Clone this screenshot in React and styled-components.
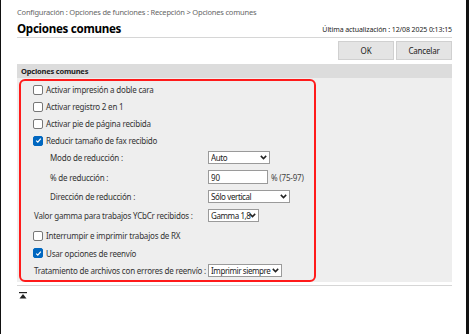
import React from "react";
import styled, { createGlobalStyle } from "styled-components";

const GlobalStyle = createGlobalStyle`
  html, body {
    margin: 0;
    padding: 0;
    background: #ffffff;
  }
  body {
    font-family: "Noto Sans", "Open Sans", sans-serif;
    font-size: 8px;
    letter-spacing: -0.2px;
    color: #333;
  }
`;

export default function App() {
  return (
    <>
      <GlobalStyle />
      <Frame>
        <Page>
          <Breadcrumb>
            Configuración : Opciones de funciones : Recepción &gt; Opciones comunes
          </Breadcrumb>
          <TitleRow>
            <Title>Opciones comunes</Title>
            <Updated>Última actualización : 12/08 2025 0:13:15</Updated>
          </TitleRow>
          <ButtonBar>
            <Button>OK</Button>
            <Button>Cancelar</Button>
          </ButtonBar>

          <Section>
            <SectionHeader>Opciones comunes</SectionHeader>
            <Panel>
              <Highlight>
                <CheckRow>
                  <Check />
                  Activar impresión a doble cara
                </CheckRow>
                <CheckRow>
                  <Check />
                  Activar registro 2 en 1
                </CheckRow>
                <CheckRow>
                  <Check />
                  Activar pie de página recibida
                </CheckRow>
                <CheckRow>
                  <Check checked />
                  Reducir tamaño de fax recibido
                </CheckRow>

                <FieldRow $h={17}>
                  <Label $indent>Modo de reducción :</Label>
                  <Select width={62} value="Auto" options={["Auto", "Fijo"]} />
                </FieldRow>
                <FieldRow $h={22}>
                  <Label $indent>% de reducción :</Label>
                  <TextInput defaultValue="90" />
                  <Hint>% (75-97)</Hint>
                </FieldRow>
                <FieldRow $h={17}>
                  <Label $indent>Dirección de reducción :</Label>
                  <Select
                    width={82}
                    value="Sólo vertical"
                    options={["Sólo vertical", "Vertical/Horizontal"]}
                  />
                </FieldRow>
                <FieldRow $h={21}>
                  <Label>Valor gamma para trabajos YCbCr recibidos :</Label>
                  <Select
                    width={51}
                    value="Gamma 1,8"
                    options={["Gamma 1,0", "Gamma 1,4", "Gamma 1,8", "Gamma 2,2"]}
                  />
                </FieldRow>

                <CheckRow $h={19}>
                  <Check />
                  Interrumpir e imprimir trabajos de RX
                </CheckRow>
                <CheckRow $h={16}>
                  <Check checked />
                  Usar opciones de reenvío
                </CheckRow>
                <FieldRow $h={18}>
                  <Label>Tratamiento de archivos con errores de reenvío :</Label>
                  <Select
                    width={74}
                    value="Imprimir siempre"
                    options={["Imprimir siempre", "Desactivado"]}
                  />
                </FieldRow>
              </Highlight>
            </Panel>
          </Section>

          <Footer>
            <ToTop aria-label="Arriba">
              <svg width="8" height="7" viewBox="0 0 8 7">
                <rect x="0" y="0" width="8" height="1.2" fill="#222" />
                <path d="M4 2 L7.5 6.5 L0.5 6.5 Z" fill="#222" />
              </svg>
            </ToTop>
          </Footer>
        </Page>
      </Frame>
    </>
  );
}

function Check({ checked }) {
  return (
    <Box $checked={checked}>
      {checked && (
        <svg width="7" height="7" viewBox="0 0 7 7">
          <path
            d="M1.2 3.6 L2.8 5.1 L5.8 1.6"
            fill="none"
            stroke="#fff"
            strokeWidth="1.3"
          />
        </svg>
      )}
    </Box>
  );
}

function Select({ width, value, options }) {
  return (
    <SelectWrap style={{ width }}>
      <NativeSelect defaultValue={value}>
        {options.map((o) => (
          <option key={o}>{o}</option>
        ))}
      </NativeSelect>
      <Chevron width="7" height="5" viewBox="0 0 7 5">
        <path d="M0.8 0.9 L3.5 3.6 L6.2 0.9" fill="none" stroke="#222" strokeWidth="1.5" />
      </Chevron>
    </SelectWrap>
  );
}

// Styled Components

const Frame = styled.div`
  position: relative;
  height: 334px;
  border-left: 1px solid #111;
  border-right: 3px solid #111;
  background: #fff;
  box-sizing: border-box;
  overflow: hidden;
`;

const Page = styled.div`
  padding: 6px 14px 0 16px;
`;

const Breadcrumb = styled.div`
  color: #666;
  font-size: 7.5px;
  letter-spacing: -0.2px;
  line-height: 12px;
`;

const TitleRow = styled.div`
  display: flex;
  justify-content: space-between;
  align-items: flex-end;
  margin-top: 3px;
  height: 16px;
  border-bottom: 1px solid #d6d6d6;
`;

const Title = styled.h1`
  margin: 0;
  font-size: 11.6px;
  letter-spacing: -0.3px;
  line-height: 16px;
  font-weight: 700;
  color: #000;
`;

const Updated = styled.div`
  font-size: 7px;
  letter-spacing: -0.1px;
  line-height: 12px;
  padding-bottom: 1px;
  color: #222;
`;

const ButtonBar = styled.div`
  display: flex;
  justify-content: flex-end;
  gap: 2px;
  margin-top: 3px;
`;

const Button = styled.button`
  width: 56px;
  height: 19px;
  padding: 0;
  font-family: inherit;
  font-size: 8px;
  letter-spacing: -0.2px;
  color: #222;
  background: #e4e4e4;
  border: 1px solid #d0d0d0;
  border-radius: 0;
`;

const Section = styled.div`
  margin-top: 4px;
`;

const SectionHeader = styled.div`
  background: #dcdcdc;
  height: 14px;
  line-height: 14px;
  padding-left: 4px;
  font-weight: 700;
  font-size: 7.5px;
  color: #222;
`;

const Panel = styled.div`
  background: #eeeeee;
  padding: 1px 0 0 2px;
`;

const Highlight = styled.div`
  width: 297px;
  box-sizing: border-box;
  border: 2px solid #ff1a1a;
  border-radius: 6px;
  padding: 0 0 1px 12px;
  margin-bottom: -3px;
  position: relative;
`;

const CheckRow = styled.label`
  display: flex;
  align-items: center;
  gap: 3px;
  height: ${(p) => p.$h || 17}px;
  color: #333;
  white-space: nowrap;
`;

const Box = styled.span`
  display: inline-flex;
  align-items: center;
  justify-content: center;
  width: 8px;
  height: 8px;
  border-radius: 2px;
  border: 1px solid ${(p) => (p.$checked ? "#0067c0" : "#777")};
  background: ${(p) => (p.$checked ? "#0067c0" : "#fff")};
  flex: none;
`;

const FieldRow = styled.div`
  display: flex;
  align-items: center;
  height: ${(p) => p.$h}px;
  margin-left: -12px;
  white-space: nowrap;
`;

const Label = styled.span`
  width: 187px;
  box-sizing: border-box;
  padding-left: ${(p) => (p.$indent ? 29 : 13)}px;
  color: #333;
  flex: none;
`;

const SelectWrap = styled.div`
  position: relative;
  height: 13px;
  flex: none;
`;

const NativeSelect = styled.select`
  appearance: none;
  width: 100%;
  height: 100%;
  box-sizing: border-box;
  margin: 0;
  padding: 0 0 0 2px;
  border: 1px solid #9a9a9a;
  border-radius: 0;
  background: #fff;
  font-family: "Noto Sans", "Open Sans", sans-serif;
  font-size: 8px;
  letter-spacing: -0.4px;
  color: #222;
  line-height: 11px;
`;

const Chevron = styled.svg`
  position: absolute;
  right: 3px;
  top: 4px;
  pointer-events: none;
`;

const TextInput = styled.input`
  width: 60px;
  height: 14px;
  box-sizing: border-box;
  margin: 0;
  padding: 0 2px;
  border: 1px solid #9a9a9a;
  border-radius: 0;
  font-family: inherit;
  font-size: 8px;
  color: #222;
`;

const Hint = styled.span`
  margin-left: 3px;
  color: #444;
`;

const Footer = styled.div`
  margin-top: 6px;
  border-top: 1px solid #d6d6d6;
  padding: 4px 0 0 2px;
`;

const ToTop = styled.a`
  display: inline-flex;
`;
